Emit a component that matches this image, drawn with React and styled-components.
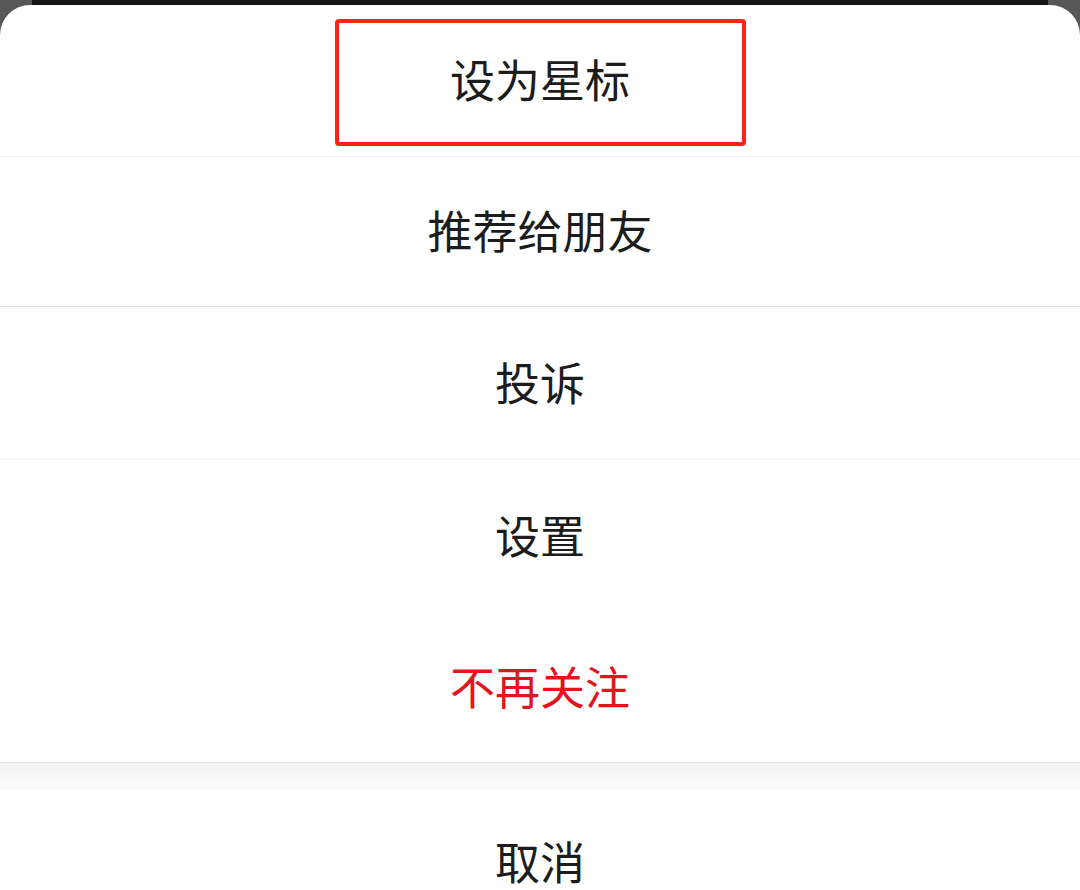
import styled, { createGlobalStyle } from "styled-components";

const GlobalStyle = createGlobalStyle`
  html, body {
    margin: 0;
    padding: 0;
    background: #575757;
    font-family: "Noto Sans CJK SC", "Noto Sans", sans-serif;
  }
`;

const Page = styled.div`
  width: 1080px;
  height: 890px;
  overflow: hidden;
  display: flex;
  flex-direction: column;
`;

const Backdrop = styled.div`
  height: 5px;
  margin: 0 32px;
  background: #141414;
  flex-shrink: 0;
`;

const Sheet = styled.div`
  flex: 1;
  background: #fff;
  border-radius: 30px 30px 0 0;
  display: flex;
  flex-direction: column;
`;

const Item = styled.div`
  height: ${(p) => p.$h}px;
  flex-shrink: 0;
  display: flex;
  align-items: center;
  justify-content: center;
  border-bottom: ${(p) => (p.$line ? `1px solid ${p.$line}` : "none")};
  font-size: 45px;
  line-height: 1;
  color: ${(p) => (p.$danger ? "#e3141c" : "#1c1c1c")};
  box-sizing: border-box;
  padding-top: ${(p) => p.$pt || 0}px;
  padding-bottom: ${(p) => p.$pb ?? 4}px;
`;

const Highlight = styled.div`
  width: 411px;
  height: 127px;
  box-sizing: border-box;
  border: 4px solid #ff2418;
  border-radius: 4px;
  display: flex;
  align-items: center;
  justify-content: center;
  padding-bottom: 8px;
`;

const Gap = styled.div`
  height: 27px;
  flex-shrink: 0;
  background: linear-gradient(#f3f3f3, #fbfbfb);
`;

const items = [
  { label: "推荐给朋友", h: 150, line: "#e2e2e2" },
  { label: "投诉", h: 153, line: "#efefef" },
  { label: "设置", h: 152 },
  { label: "不再关注", h: 151, danger: true, line: "#e6e6e6" },
];

const App = () => {
  return (
    <>
      <GlobalStyle />
      <Page>
        <Backdrop />
        <Sheet>
          <Item $h={152} $pt={4} $pb={0} $line="#f4f4f4">
            <Highlight>设为星标</Highlight>
          </Item>
          {items.map((it) => (
            <Item key={it.label} $h={it.h} $line={it.line} $danger={it.danger}>
              {it.label}
            </Item>
          ))}
          <Gap />
          <Item $h={144}>取消</Item>
        </Sheet>
      </Page>
    </>
  );
};

export default App;
